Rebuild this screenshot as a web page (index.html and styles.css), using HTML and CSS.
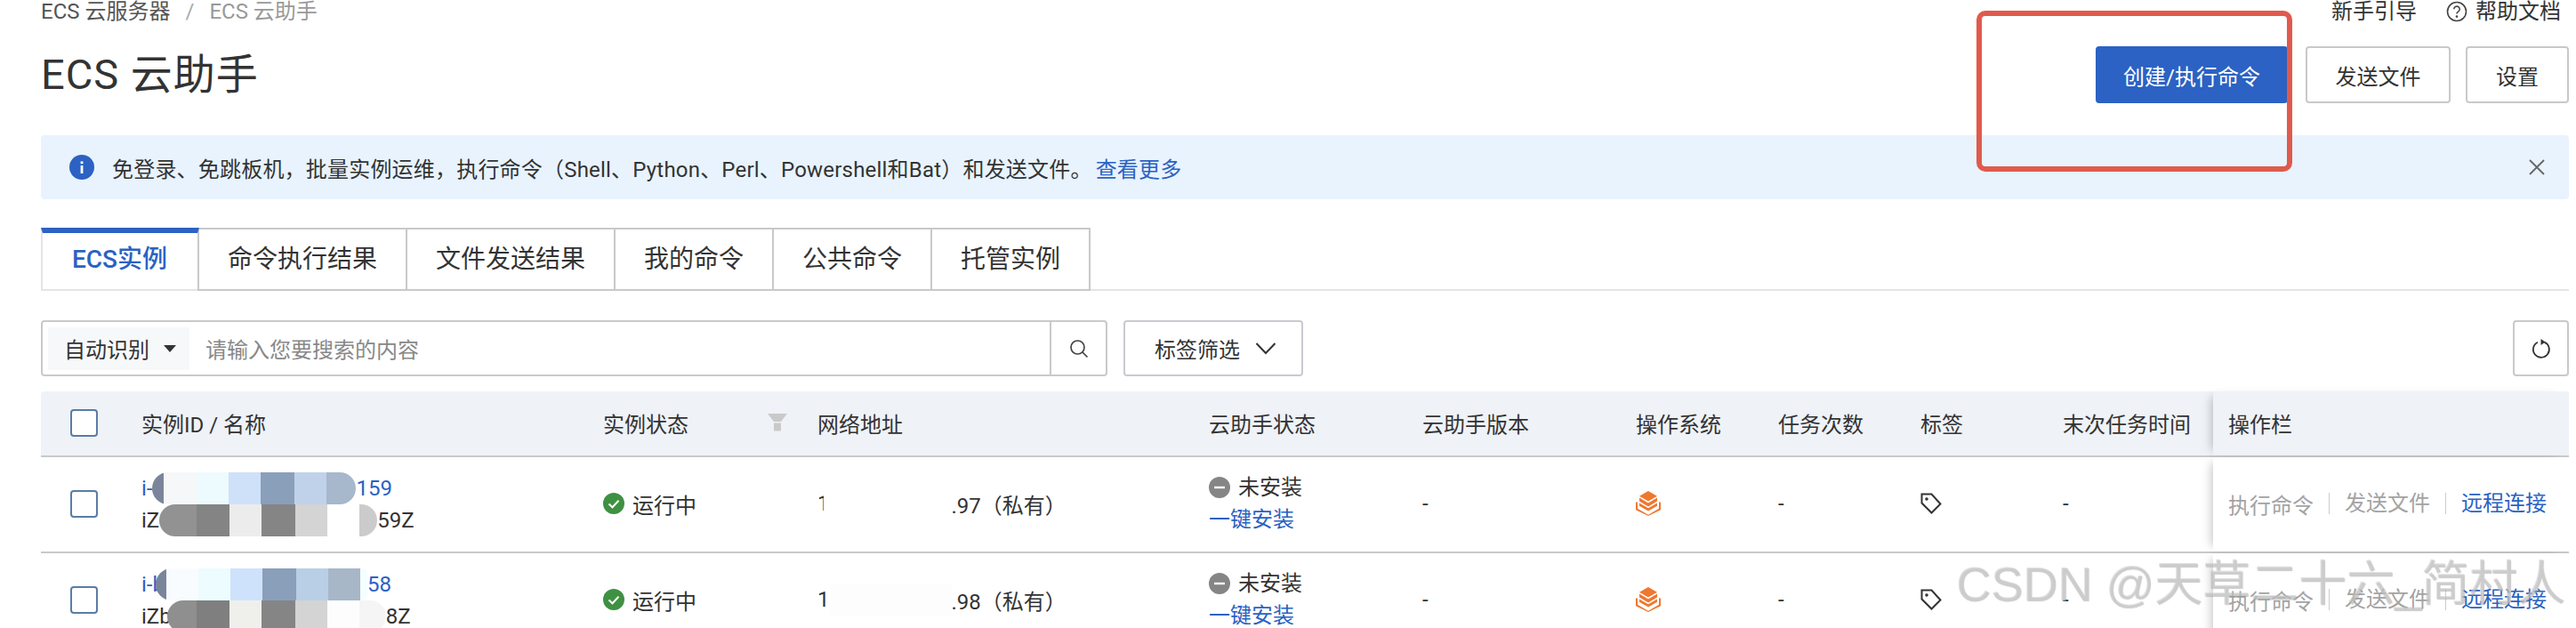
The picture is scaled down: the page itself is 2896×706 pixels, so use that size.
FILE: index.html
```html
<!DOCTYPE html>
<html lang="zh-CN">
<head>
  <meta charset="UTF-8">
  <title>ECS 云助手</title>
  <link rel="stylesheet" href="styles.css">
</head>
<body>
  <div class="topbar">
    <div class="crumbs"><span>ECS 云服务器</span><i>/</i><span class="muted">ECS 云助手</span></div>
    <div class="toplinks">
      <span>新手引导</span>
      <span class="help">
        <svg width="24" height="24" viewBox="0 0 24 24" fill="none" stroke="#444" stroke-width="1.6"><circle cx="12" cy="12" r="10.5"/><path d="M8.8 9.3a3.2 3.2 0 1 1 4.8 2.8c-1 .6-1.6 1.2-1.6 2.4"/><circle cx="12" cy="17.6" r=".6" fill="#444"/></svg>
        帮助文档
      </span>
    </div>
  </div>

  <div class="heading">
    <h1>ECS 云助手</h1>
    <div class="actions">
      <button class="btn primary">创建/执行命令</button>
      <button class="btn">发送文件</button>
      <button class="btn small">设置</button>
    </div>
  </div>

  <div class="alert">
    <svg class="alert-icon" width="28" height="28" viewBox="0 0 28 28"><circle cx="14" cy="14" r="14" fill="#2b62c3"/><rect x="12.6" y="12" width="2.8" height="9" fill="#fff"/><rect x="12.6" y="7.4" width="2.8" height="2.8" fill="#fff"/></svg>
    <span class="alert-text">免登录、免跳板机，批量实例运维，执行命令（Shell、Python、Perl、Powershell和Bat）和发送文件。<a>查看更多</a></span>
    <svg class="alert-close" width="18" height="18" viewBox="0 0 18 18" fill="none" stroke="#666" stroke-width="1.8"><path d="M1 1l16 16M17 1L1 17"/></svg>
  </div>

  <div class="tabs">
    <div class="tab active">ECS实例</div>
    <div class="tab">命令执行结果</div>
    <div class="tab">文件发送结果</div>
    <div class="tab">我的命令</div>
    <div class="tab">公共命令</div>
    <div class="tab">托管实例</div>
  </div>

  <div class="toolbar">
    <div class="search">
      <div class="search-type">自动识别<span class="caret"></span></div>
      <div class="search-input">请输入您要搜索的内容</div>
      <div class="search-btn">
        <svg width="22" height="22" viewBox="0 0 22 22" fill="none" stroke="#444" stroke-width="1.7"><circle cx="9.5" cy="9.5" r="7.5"/><path d="M15 15l5.5 5.5"/></svg>
      </div>
    </div>
    <div class="tag-filter">标签筛选
      <svg width="24" height="14" viewBox="0 0 24 14" fill="none" stroke="#333" stroke-width="2"><path d="M1.5 1l10.5 11L22.5 1"/></svg>
    </div>
    <div class="refresh">
      <svg width="22" height="24" viewBox="0 0 22 24" fill="none" stroke="#333" stroke-width="1.8"><path d="M14.5 4.6A9 9 0 1 1 7 4.7"/><path d="M10.5 1l5 3.6-5 3.4z" fill="#333" stroke="none"/></svg>
    </div>
  </div>

  <div class="table">
    <div class="row head">
      <div class="cell"><span class="check"></span></div>
      <div class="cell">实例ID / 名称</div>
      <div class="cell between">实例状态
        <svg class="funnel" width="22" height="20" viewBox="0 0 22 20" fill="#c9c9c9"><path d="M0 0h22l-7 9H7z"/><rect x="7" y="10.5" width="8" height="9"/></svg>
      </div>
      <div class="cell">网络地址</div>
      <div class="cell">云助手状态</div>
      <div class="cell">云助手版本</div>
      <div class="cell">操作系统</div>
      <div class="cell">任务次数</div>
      <div class="cell">标签</div>
      <div class="cell">末次任务时间</div>
      <div class="cell ops">操作栏</div>
    </div>

    <div class="row">
      <div class="cell"><span class="check"></span></div>
      <div class="cell stack">
        <div class="line link">i-<span class="blur blur-1a"></span>159</div>
        <div class="line">iZ<span class="blur blur-1b"></span>59Z</div>
      </div>
      <div class="cell status">
        <svg width="24" height="24" viewBox="0 0 24 24"><circle cx="12" cy="12" r="12" fill="#3f9142"/><path d="M6.5 12.5l4 3.8 7-7.6" fill="none" stroke="#fff" stroke-width="2"/></svg>
        运行中
      </div>
      <div class="cell">1<span class="blur blur-addr blur-addr-over"></span>.97（私有）</div>
      <div class="cell stack state">
        <div class="line status">
          <svg width="24" height="24" viewBox="0 0 24 24"><circle cx="12" cy="12" r="12" fill="#858585"/><rect x="6" y="10.8" width="12" height="2.4" fill="#fff"/></svg>
          未安装
        </div>
        <div class="line link">一键安装</div>
      </div>
      <div class="cell">-</div>
      <div class="cell">
        <svg width="28" height="28" viewBox="0 0 28 28" fill="#f0772e"><path d="M14 0l10 5.8L14 11.6 4 5.8z"/><path d="M4 7.6l10 5.8 10-5.8v4L14 17.4 4 11.6z"/><path d="M4 13.4l10 5.8 10-5.8v3.4l-10 5.8-10-5.8z"/><path d="M0 12.5h2v7.3l12 7 12-7v-7.3h2v8.8L14 28 0 21.3z"/></svg>
      </div>
      <div class="cell">-</div>
      <div class="cell">
        <svg width="24" height="24" viewBox="0 0 24 24" fill="none" stroke="#333" stroke-width="2"><path d="M1.5 1.5H12.5L22.5 12.5 12.5 22.5 1.5 11.5z"/><circle cx="7" cy="7" r="1.8" fill="#333" stroke="none"/></svg>
      </div>
      <div class="cell">-</div>
      <div class="cell ops">
        <span class="op">执行命令</span><span class="op">发送文件</span><span class="op link">远程连接</span>
      </div>
    </div>

    <div class="row">
      <div class="cell"><span class="check"></span></div>
      <div class="cell stack">
        <div class="line link">i-b<span class="blur blur-2a"></span>58</div>
        <div class="line">iZb<span class="blur blur-2b"></span>8Z</div>
      </div>
      <div class="cell status">
        <svg width="24" height="24" viewBox="0 0 24 24"><circle cx="12" cy="12" r="12" fill="#3f9142"/><path d="M6.5 12.5l4 3.8 7-7.6" fill="none" stroke="#fff" stroke-width="2"/></svg>
        运行中
      </div>
      <div class="cell">1<span class="blur blur-addr"></span>.98（私有）</div>
      <div class="cell stack state">
        <div class="line status">
          <svg width="24" height="24" viewBox="0 0 24 24"><circle cx="12" cy="12" r="12" fill="#858585"/><rect x="6" y="10.8" width="12" height="2.4" fill="#fff"/></svg>
          未安装
        </div>
        <div class="line link">一键安装</div>
      </div>
      <div class="cell">-</div>
      <div class="cell">
        <svg width="28" height="28" viewBox="0 0 28 28" fill="#f0772e"><path d="M14 0l10 5.8L14 11.6 4 5.8z"/><path d="M4 7.6l10 5.8 10-5.8v4L14 17.4 4 11.6z"/><path d="M4 13.4l10 5.8 10-5.8v3.4l-10 5.8-10-5.8z"/><path d="M0 12.5h2v7.3l12 7 12-7v-7.3h2v8.8L14 28 0 21.3z"/></svg>
      </div>
      <div class="cell">-</div>
      <div class="cell">
        <svg width="24" height="24" viewBox="0 0 24 24" fill="none" stroke="#333" stroke-width="2"><path d="M1.5 1.5H12.5L22.5 12.5 12.5 22.5 1.5 11.5z"/><circle cx="7" cy="7" r="1.8" fill="#333" stroke="none"/></svg>
      </div>
      <div class="cell">-</div>
      <div class="cell ops">
        <span class="op">执行命令</span><span class="op">发送文件</span><span class="op link">远程连接</span>
      </div>
    </div>
  </div>

  <div class="red-box"></div>
  <div class="watermark">CSDN @天草二十六_简村人</div>
</body>
</html>
```

FILE: styles.css
```css
* { box-sizing: border-box; }
html, body { height: 706px; overflow: hidden; }
body { position: relative; margin: 0; padding: 0 8px 0 46px; background: #fff; color: #333; font-family: Roboto, "Noto Sans CJK SC", sans-serif; font-size: 24px; }
svg { display: block; flex: none; }

.topbar { display: flex; justify-content: space-between; height: 26px; line-height: 26px; }
.crumbs { display: flex; color: #555; }
.crumbs i { margin: 0 17px; color: #aaa; font-style: normal; }
.crumbs .muted { color: #999; }
.toplinks { display: flex; gap: 33px; }
.help { display: flex; align-items: center; gap: 9px; margin-right: 9px; }

.heading { display: flex; justify-content: space-between; align-items: center; height: 64px; margin-top: 26px; }
h1 { margin: 0; font-size: 47px; font-weight: 400; letter-spacing: 1px; line-height: 64px; }
.actions { display: flex; gap: 20px; }
.btn { width: 163px; height: 64px; padding: 0; border: 2px solid #c9c9c9; border-radius: 4px; background: #fff; color: #333; font: inherit; }
.btn.small { width: 116px; margin-left: -3px; }
.btn.primary { width: 216px; border: none; background: #2b62c3; color: #fff; }

.alert { display: flex; align-items: center; height: 72px; margin-top: 36px; padding: 0 27px 0 32px; border-radius: 4px; background: #e8f3fe; }
.alert-icon { margin-right: 20px; }
.alert-text { flex: 1; letter-spacing: .2px; }
.alert-text a { margin-left: 4px; }
.alert-text a, .link { color: #2b62c3; }

.tabs { display: flex; margin-top: 32px; border-bottom: 2px solid #e5e5e5; }
.tab { height: 71px; margin-bottom: -2px; padding: 0 32px; border: 2px solid #c9c9c9; border-left: none; font-size: 28px; line-height: 67px; white-space: nowrap; }
.tab.active { width: 178px; padding: 0 0 0 33px; border-top: 6px solid #2b62c3; border-left: 2px solid #e5e5e5; border-bottom: none; color: #2b62c3; font-weight: 500; line-height: 60px; }

.toolbar { display: flex; height: 63px; margin-top: 33px; }
.search { display: flex; align-items: center; width: 1199px; padding-left: 6px; border: 2px solid #c9c9c9; border-radius: 4px; }
.search-type { display: flex; align-items: center; width: 159px; height: 48px; padding-left: 18px; background: #f7f8fa; }
.caret { margin-left: 16px; border: 7px solid transparent; border-top: 8px solid #333; border-bottom: none; }
.search-input { flex: 1; padding-left: 18px; color: #888; }
.search-btn { display: flex; align-items: center; justify-content: center; width: 63px; height: 100%; border-left: 2px solid #c9c9c9; }
.tag-filter { display: flex; align-items: center; gap: 17px; width: 202px; margin-left: 18px; padding-left: 33px; border: 2px solid #c9c9d2; border-radius: 4px; }
.refresh { display: flex; align-items: center; justify-content: center; width: 63px; margin-left: auto; border: 2px solid #c9c9c9; border-radius: 4px; }

.table { margin-top: 17px; }
.row { display: grid; grid-template-columns: 113px 519px 241px 440px 240px 240px 160px 160px 160px 169px 400px; height: 108px; border-bottom: 2px solid #c9c9c9; }
.row.head { height: 74px; border-radius: 4px 4px 0 0; background: #eff2f7; }
.cell { display: flex; align-items: center; padding-bottom: 2px; white-space: nowrap; }
.cell.stack { display: block; align-self: center; padding-bottom: 0; }
.cell.state { padding-bottom: 3px; }
.cell.between { justify-content: space-between; padding-right: 34px; }
.cell.status { gap: 9px; }
.cell.ops { position: relative; padding-left: 17px; background: #fff; box-shadow: -8px 0 10px -6px rgba(0,0,0,.22); }
.head .cell.ops { background: #eff2f7; }
.line { display: flex; align-items: center; height: 36px; line-height: 36px; }
.line.status { gap: 9px; }
.check { width: 31px; height: 31px; margin-left: 33px; border: 2px solid #5a7ca5; border-radius: 4px; background: #fff; }
.op { color: #a3a3a3; }
.op.link { color: #2b62c3; }
.op + .op { margin-left: 17px; padding-left: 17px; border-left: 1px solid #ccc; line-height: 24px; }

.blur { flex: none; display: inline-block; height: 36px; }
.blur-addr { width: 137px; background: #fdfdfd; }
.blur-addr-over { margin-left: -7px; width: 144px; background: #fff; }
.blur-1a { width: 229px; border-radius: 18px; background: linear-gradient(90deg, #7a859b 13px, #f6f7f9 13px 50px, #edfbfe 50px 86px, #cfe1f8 86px 122px, #8a9fba 122px 160px, #c0d2ea 160px 196px, #a7b7cc 196px); }
.blur-1b { width: 245px; border-radius: 18px; background: linear-gradient(90deg, #929292 42px, #848484 42px 79px, #ececec 79px 115px, #858585 115px 153px, #d4d4d4 153px 189px, #fff 189px 225px, #cbcbcb 225px); }
.blur-2a { width: 238px; margin-left: -10px; border-radius: 18px 6px 6px 18px; background: linear-gradient(90deg, #7a859b 12px, #f8fcfe 12px 48px, #ecfcff 48px 84px, #cfe2fb 84px 120px, #8a9fba 120px 158px, #b9cfe6 158px 194px, #a7b7c8 194px 230px, #f5feff 230px); }
.blur-2b { width: 246px; margin-left: -5px; border-radius: 18px; background: linear-gradient(90deg, #8f8f8f 33px, #7f7f7f 33px 70px, #eff0ec 70px 106px, #858585 106px 144px, #d4d4d4 144px 180px, #fdfdfd 180px 216px, #f5f5f5 216px); }

.red-box { position: absolute; left: 2222px; top: 12px; width: 355px; height: 181px; border: 6px solid #e05a4c; border-radius: 10px; }
.watermark { position: absolute; left: 2199px; top: 618px; color: rgba(205,205,205,.55); font-family: "Liberation Sans", "Noto Sans CJK SC", sans-serif; font-size: 54px; line-height: 76px; white-space: nowrap; text-shadow: 1px 1px 1px rgba(150,150,150,.5); }
```
